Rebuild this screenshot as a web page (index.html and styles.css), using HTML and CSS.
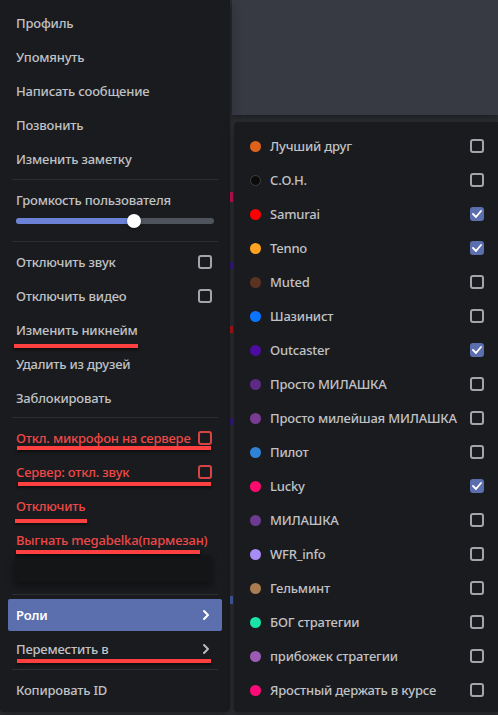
FILE: index.html
```html
<!DOCTYPE html>
<html lang="ru">
<head>
<meta charset="utf-8">
<link rel="stylesheet" href="styles.css">
</head>
<body>
<div class="stage">
  <div class="bg-strip">
    <span class="frag frag-a"></span>
    <span class="frag frag-b"></span>
    <span class="frag frag-c"></span>
    <span class="frag frag-d"></span>
    <span class="frag frag-e"></span>
  </div>
  <div class="panel-top"></div>

  <div class="menu menu-left">
    <div class="item">Профиль</div>
    <div class="item">Упомянуть</div>
    <div class="item">Написать сообщение</div>
    <div class="item">Позвонить</div>
    <div class="item">Изменить заметку</div>
    <div class="sep"></div>
    <div class="volume">
      <div class="vol-label">Громкость пользователя</div>
      <div class="slider">
        <div class="track"><div class="fill"></div></div>
        <div class="knob"></div>
      </div>
    </div>
    <div class="sep"></div>
    <div class="item">Отключить звук<span class="cb"></span></div>
    <div class="item">Отключить видео<span class="cb"></span></div>
    <div class="item">Изменить никнейм<span class="mark mark-nick"></span></div>
    <div class="item">Удалить из друзей</div>
    <div class="item">Заблокировать</div>
    <div class="sep sep-tight"></div>
    <div class="item danger">Откл. микрофон на сервере<span class="cb cb-red"></span><span class="mark mark-mic"></span></div>
    <div class="item danger">Сервер: откл. звук<span class="cb cb-red"></span><span class="mark mark-srv"></span></div>
    <div class="item danger">Отключить<span class="mark mark-off"></span></div>
    <div class="item danger">Выгнать megabelka(пармезан)<span class="mark mark-kick"></span></div>
    <div class="ghost"></div>
    <div class="sep"></div>
    <div class="item active">Роли
      <svg class="chev" width="8" height="12" viewBox="0 0 8 12"><path d="M2 2l4 4-4 4" fill="none" stroke="currentColor" stroke-width="2" stroke-linecap="round" stroke-linejoin="round"/></svg>
    </div>
    <div class="item">Переместить в
      <svg class="chev" width="8" height="12" viewBox="0 0 8 12"><path d="M2 2l4 4-4 4" fill="none" stroke="currentColor" stroke-width="2" stroke-linecap="round" stroke-linejoin="round"/></svg>
      <span class="mark mark-move"></span>
    </div>
    <div class="sep"></div>
    <div class="item">Копировать ID</div>
  </div>

  <div class="menu menu-right">
    <div class="role"><span class="dot c1"></span><span class="rname">Лучший друг</span><span class="cb"></span></div>
    <div class="role"><span class="dot c2"></span><span class="rname">С.О.Н.</span><span class="cb"></span></div>
    <div class="role"><span class="dot c3"></span><span class="rname">Samurai</span><span class="cb on"><svg width="10" height="8" viewBox="0 0 10 8"><path d="M1 4l3 3 5-6" fill="none" stroke="#fff" stroke-width="1.8" stroke-linecap="round" stroke-linejoin="round"/></svg></span></div>
    <div class="role"><span class="dot c4"></span><span class="rname">Tenno</span><span class="cb on"><svg width="10" height="8" viewBox="0 0 10 8"><path d="M1 4l3 3 5-6" fill="none" stroke="#fff" stroke-width="1.8" stroke-linecap="round" stroke-linejoin="round"/></svg></span></div>
    <div class="role"><span class="dot c5"></span><span class="rname">Muted</span><span class="cb"></span></div>
    <div class="role"><span class="dot c6"></span><span class="rname">Шазинист</span><span class="cb"></span></div>
    <div class="role"><span class="dot c7"></span><span class="rname">Outcaster</span><span class="cb on"><svg width="10" height="8" viewBox="0 0 10 8"><path d="M1 4l3 3 5-6" fill="none" stroke="#fff" stroke-width="1.8" stroke-linecap="round" stroke-linejoin="round"/></svg></span></div>
    <div class="role"><span class="dot c8"></span><span class="rname">Просто МИЛАШКА</span><span class="cb"></span></div>
    <div class="role"><span class="dot c9"></span><span class="rname">Просто милейшая МИЛАШКА</span><span class="cb"></span></div>
    <div class="role"><span class="dot c10"></span><span class="rname">Пилот</span><span class="cb"></span></div>
    <div class="role"><span class="dot c11"></span><span class="rname">Lucky</span><span class="cb on"><svg width="10" height="8" viewBox="0 0 10 8"><path d="M1 4l3 3 5-6" fill="none" stroke="#fff" stroke-width="1.8" stroke-linecap="round" stroke-linejoin="round"/></svg></span></div>
    <div class="role"><span class="dot c12"></span><span class="rname">МИЛАШКА</span><span class="cb"></span></div>
    <div class="role"><span class="dot c13"></span><span class="rname">WFR_info</span><span class="cb"></span></div>
    <div class="role"><span class="dot c14"></span><span class="rname">Гельминт</span><span class="cb"></span></div>
    <div class="role"><span class="dot c15"></span><span class="rname">БОГ стратегии</span><span class="cb"></span></div>
    <div class="role"><span class="dot c16"></span><span class="rname">прибожек стратегии</span><span class="cb"></span></div>
    <div class="role"><span class="dot c17"></span><span class="rname">Яростный держать в курсе</span><span class="cb"></span></div>
  </div>
</div>
</body>
</html>
```

FILE: styles.css
```css
* { box-sizing: border-box; }
html, body { margin: 0; padding: 0; }
body {
  width: 498px;
  height: 715px;
  overflow: hidden;
  background: #2b2d31;
  font-family: "Noto Sans", "Open Sans", sans-serif;
  font-size: 13px;
  font-weight: 500;
  letter-spacing: -0.2px;
  color: #b9bbbe;
}
.stage { position: relative; width: 498px; height: 715px; }

.bg-strip {
  position: absolute;
  left: 226px; top: 0;
  width: 10px; height: 715px;
  background: #2e3035;
}
.frag { position: absolute; left: 4px; width: 3px; height: 10px; }
.frag-a { top: 192px; background: #d4145a; }
.frag-b { top: 262px; background: #3a1a8a; height: 7px; }
.frag-c { top: 326px; background: #c0161e; height: 7px; }
.frag-d { top: 418px; background: #3a1a8a; height: 7px; }
.frag-e { top: 596px; background: #4d68b5; height: 8px; }

.panel-top {
  position: absolute;
  left: 232px; top: 0;
  width: 266px; height: 115px;
  background: #373a43;
  box-shadow: 0 2px 6px rgba(0,0,0,.35);
}

.menu {
  position: absolute;
  display: flex;
  flex-direction: column;
  background: #1a1b1e;
  box-shadow: 0 4px 12px rgba(0,0,0,.3);
}
.menu-left {
  left: 0; top: 0;
  width: 230px; height: 712px;
  padding: 7px 8px 0;
  border-radius: 0 0 4px 4px;
}
.menu-right {
  left: 234px; top: 122px;
  width: 266px; height: 590px;
  padding: 8px 8px 0;
  border-radius: 4px;
}

.item {
  position: relative;
  flex: none;
  display: flex;
  align-items: center;
  justify-content: space-between;
  height: 32px;
  margin-bottom: 2px;
  padding: 0 10px 0 8px;
  border-radius: 2px;
  color: #c0c2c6;
  white-space: nowrap;
}
.item.danger { color: #ee4848; }
.item.active {
  background: #5b6eae;
  color: #fff;
  font-weight: 600;
}
.chev { margin-right: 2px; color: #b9bbbe; }
.active .chev { color: #fff; }

.sep {
  flex: none;
  height: 1px;
  margin: 2px 4px 4px;
  background: #2c2e33;
}
.sep-tight { margin-top: 1px; }

.volume {
  flex: none;
  height: 55px;
  padding: 8px 8px 0;
}
.vol-label { height: 16px; line-height: 16px; color: #c0c2c6; }
.slider {
  position: relative;
  margin-top: 6px;
  height: 14px;
  display: flex;
  align-items: center;
}
.track {
  width: 198px; height: 6px;
  border-radius: 3px;
  background: #4f545c;
  overflow: hidden;
}
.fill { width: 118px; height: 6px; background: #6b82d6; }
.knob {
  position: absolute;
  left: 111px; top: 0;
  width: 14px; height: 14px;
  border-radius: 50%;
  background: #fff;
  box-shadow: 0 1px 3px rgba(0,0,0,.4);
}

.cb {
  flex: none;
  width: 14px; height: 14px;
  border: 2px solid #a2a5aa;
  border-radius: 3px;
  display: flex;
  align-items: center;
  justify-content: center;
}
.cb-red { border-color: #d84444; }
.cb.on { background: #5b6eae; border-color: #5b6eae; }

.mark {
  position: absolute;
  height: 4px;
  background: #ff4040;
  box-shadow: 0 2px 3px rgba(0,0,0,.5);
}
.mark-nick { left: 6px; top: 30px; width: 124px; }
.mark-mic { left: 9px; top: 24px; width: 194px; }
.mark-srv { left: 10px; top: 26px; width: 193px; }
.mark-off { left: 7px; top: 29px; width: 72px; }
.mark-kick { left: 8px; top: 26px; width: 184px; }
.mark-move { left: 9px; top: 26px; width: 194px; }

.ghost {
  flex: none;
  height: 27px;
  margin: -3px 11px 10px 7px;
  background: #141517;
  box-shadow: 0 4px 8px rgba(0,0,0,.45);
}

.role {
  flex: none;
  display: flex;
  align-items: center;
  height: 32px;
  margin-bottom: 2px;
  padding: 0 8px;
  color: #c0c2c6;
  white-space: nowrap;
}
.dot {
  flex: none;
  width: 11px; height: 11px;
  border-radius: 50%;
  margin-right: 9px;
}
.rname { flex: 1; }
.c1 { background: #e0611c; }
.c2 { background: #0b0b0c; border: 1px solid #3d3f44; }
.c3 { background: #ff0000; }
.c4 { background: #ffa21f; }
.c5 { background: #5c3320; }
.c6 { background: #0b74ff; }
.c7 { background: #4c0ca0; }
.c8 { background: #5d2a86; }
.c9 { background: #7a3c92; }
.c10 { background: #2f83d6; }
.c11 { background: #ff0a6e; }
.c12 { background: #6c3a90; }
.c13 { background: #a88cf7; }
.c14 { background: #a97c52; }
.c15 { background: #1ae4a8; }
.c16 { background: #9b5bb5; }
.c17 { background: #ff0a78; }
```
